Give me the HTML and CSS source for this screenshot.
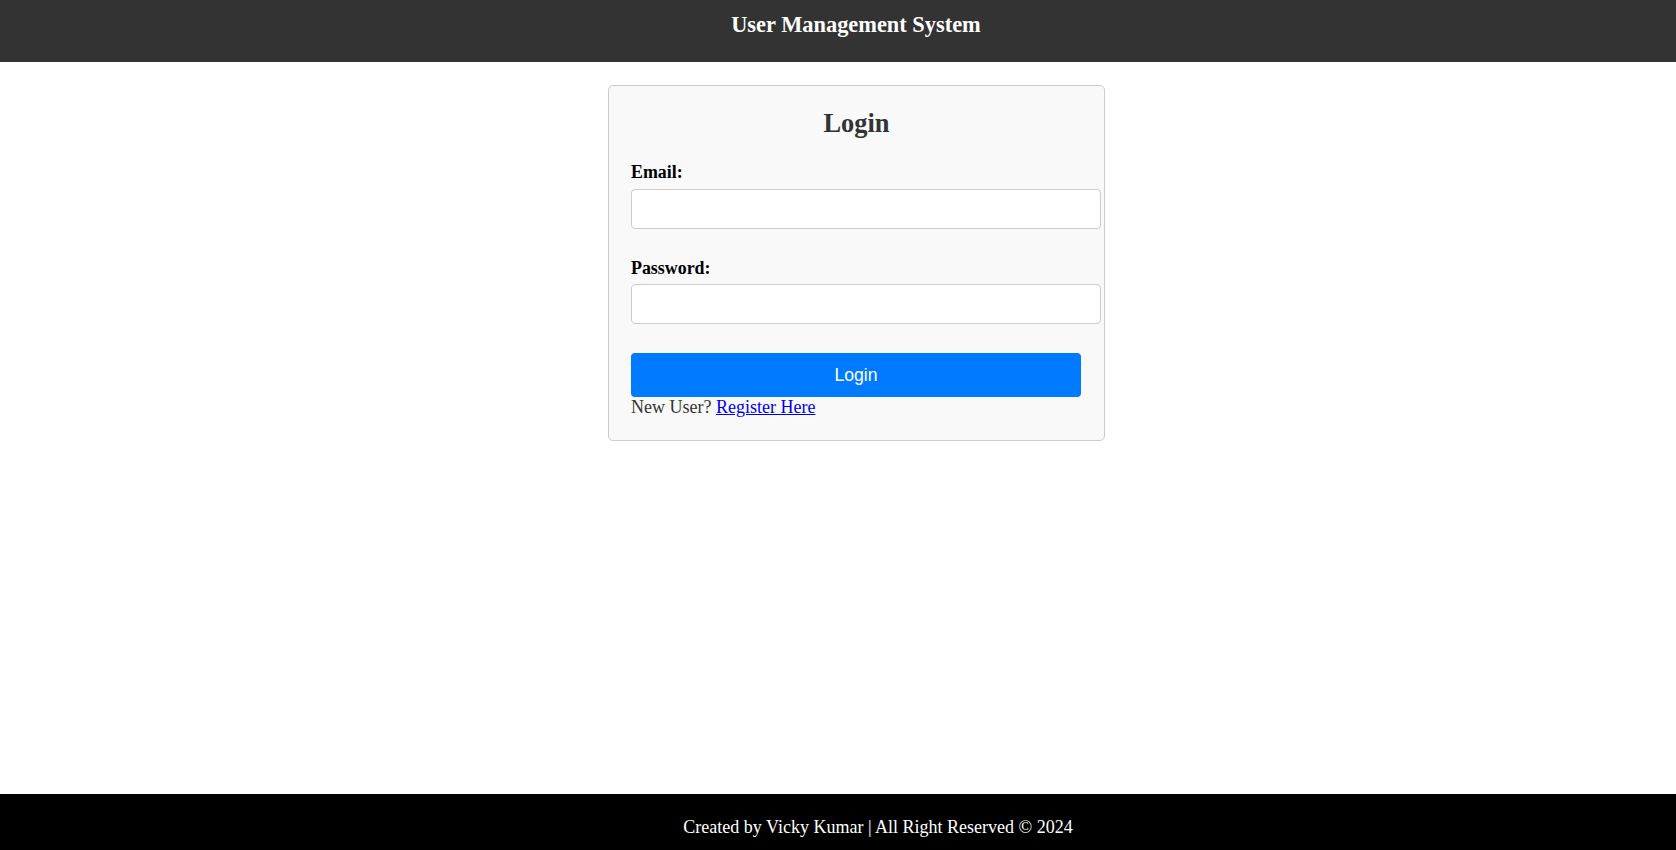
FILE: index.html
```html
<!DOCTYPE html>
<html lang="en">
<head>
<meta charset="utf-8">
<title>User Management System</title>
<link rel="stylesheet" href="styles.css">
</head>
<body>
<header class="site-header">
  <h1 class="site-title">User Management System</h1>
</header>
<main class="main">
  <div class="card">
    <h2 class="card-title">Login</h2>
    <form class="form">
      <label class="label" for="email">Email:</label>
      <input class="input" type="email" id="email">
      <label class="label label-pw" for="password">Password:</label>
      <input class="input" type="password" id="password">
      <button class="btn" type="button">Login</button>
      <p class="note">New User? <a class="link" href="#">Register Here</a></p>
    </form>
  </div>
</main>
<footer class="site-footer">
  <p class="footer-text">Created by Vicky Kumar | All Right Reserved © 2024</p>
</footer>
</body>
</html>
```

FILE: styles.css
```css
* { box-sizing: border-box; }
html, body { margin: 0; padding: 0; }
body {
  font-family: "Liberation Serif", "Times New Roman", serif;
  font-size: 17.6px;
  min-height: 100vh;
  display: flex;
  flex-direction: column;
  background: #fff;
}
.site-header {
  background: #333;
  height: 62px;
  padding: 12px 0 0 36px;
  text-align: center;
}
.site-title {
  margin: 0;
  color: #fff;
  font-size: 22.4px;
  line-height: 26px;
  font-weight: bold;
}
.main {
  flex: 1;
  padding: 23px 0 0 37px;
}
.card {
  width: 497px;
  margin: 0 auto;
  background: #f9f9f9;
  border: 1px solid #ccc;
  border-radius: 5px;
  padding: 22px 22px 23px;
}
.card-title {
  margin: 0;
  text-align: center;
  color: #333;
  font-size: 26.4px;
  line-height: 30px;
  font-weight: bold;
}
.form {
  display: flex;
  flex-direction: column;
  align-items: flex-start;
  margin-top: 24px;
}
.label {
  display: block;
  font-weight: bold;
  color: #000;
  font-size: 17.9px;
  line-height: 20px;
  margin-bottom: 6.5px;
}
.label-pw { margin-top: 29px; }
.input {
  width: 470px;
  height: 40px;
  border: 1px solid #ccc;
  border-radius: 4px;
  background: #fff;
  padding: 0 10px;
  font-size: 17.6px;
  margin: 0;
}
.btn {
  margin-top: 29px;
  width: 450px;
  height: 44px;
  border: none;
  border-radius: 4px;
  background: #007bff;
  color: #fff;
  font-family: "Liberation Sans", Arial, sans-serif;
  font-size: 17.6px;
  padding: 0;
  cursor: pointer;
}
.note {
  margin: 0;
  font-size: 18px;
  line-height: 20px;
  color: #333;
}
.link { color: #0000ee; text-decoration: underline; }
.site-footer {
  background: #000;
  height: 56px;
  padding: 23px 0 0 80px;
  text-align: center;
}
.footer-text {
  margin: 0;
  color: #fff;
  font-size: 18px;
  line-height: 20px;
}
```
